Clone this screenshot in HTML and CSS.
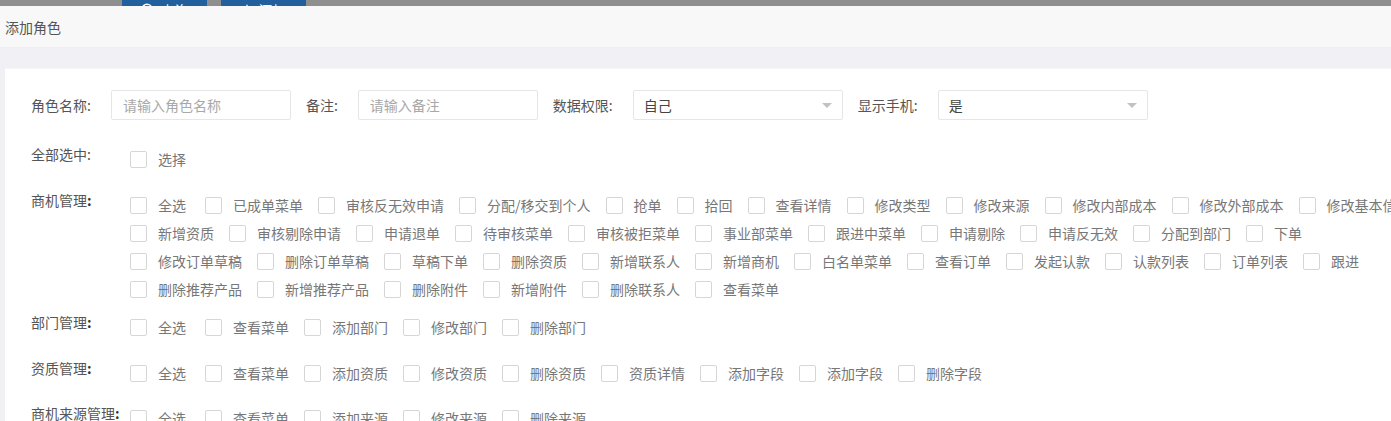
FILE: index.html
```html
<!DOCTYPE html>
<html lang="zh-CN">
<head>
<meta charset="utf-8">
<title>添加角色</title>
<link rel="stylesheet" href="styles.css">
</head>
<body>
<div class="backdrop">
  <div class="bg-btn btn-search"><svg class="ico" viewBox="0 0 14 14" width="14" height="14"><circle cx="6" cy="6" r="4.8" fill="none" stroke="#fff" stroke-width="1.4"/><path d="M9.5 9.5 L13 13" stroke="#fff" stroke-width="1.4"/></svg><span>查询</span></div>
  <div class="bg-btn btn-add"><svg class="ico" viewBox="0 0 14 14" width="12" height="12"><path d="M7 1 V13 M1 7 H13" stroke="#fff" stroke-width="1.6"/></svg><span>添加</span></div>
</div>
<div class="layer">
  <div class="layer-title">添加角色</div>
  <div class="layer-body">
    <div class="panel">
      <div class="form-line">
        <span class="f-label">角色名称:</span>
        <div class="input w180"><span class="ph">请输入角色名称</span></div>
        <span class="f-label">备注:</span>
        <div class="input w180"><span class="ph">请输入备注</span></div>
        <span class="f-label">数据权限:</span>
        <div class="input select w210"><span class="val">自己</span><i class="arrow"></i></div>
        <span class="f-label">显示手机:</span>
        <div class="input select w210"><span class="val">是</span><i class="arrow"></i></div>
      </div>

      <div class="sec sec-all">
        <div class="s-label">全部选中:</div>
        <div class="rows">
          <div class="row"><label class="cb"><i class="box"></i><span>选择</span></label></div>
        </div>
      </div>

      <div class="sec sec-biz">
        <div class="s-label">商机管理<b>:</b></div>
        <div class="rows">
          <div class="row">
            <label class="cb first"><i class="box"></i><span>全选</span></label>
            <label class="cb"><i class="box"></i><span>已成单菜单</span></label>
            <label class="cb"><i class="box"></i><span>审核反无效申请</span></label>
            <label class="cb"><i class="box"></i><span>分配/移交到个人</span></label>
            <label class="cb"><i class="box"></i><span>抢单</span></label>
            <label class="cb"><i class="box"></i><span>拾回</span></label>
            <label class="cb"><i class="box"></i><span>查看详情</span></label>
            <label class="cb"><i class="box"></i><span>修改类型</span></label>
            <label class="cb"><i class="box"></i><span>修改来源</span></label>
            <label class="cb"><i class="box"></i><span>修改内部成本</span></label>
            <label class="cb"><i class="box"></i><span>修改外部成本</span></label>
            <label class="cb"><i class="box"></i><span>修改基本信息</span></label>
          </div>
          <div class="row">
            <label class="cb"><i class="box"></i><span>新增资质</span></label>
            <label class="cb"><i class="box"></i><span>审核剔除申请</span></label>
            <label class="cb"><i class="box"></i><span>申请退单</span></label>
            <label class="cb"><i class="box"></i><span>待审核菜单</span></label>
            <label class="cb"><i class="box"></i><span>审核被拒菜单</span></label>
            <label class="cb"><i class="box"></i><span>事业部菜单</span></label>
            <label class="cb"><i class="box"></i><span>跟进中菜单</span></label>
            <label class="cb"><i class="box"></i><span>申请剔除</span></label>
            <label class="cb"><i class="box"></i><span>申请反无效</span></label>
            <label class="cb"><i class="box"></i><span>分配到部门</span></label>
            <label class="cb"><i class="box"></i><span>下单</span></label>
          </div>
          <div class="row">
            <label class="cb"><i class="box"></i><span>修改订单草稿</span></label>
            <label class="cb"><i class="box"></i><span>删除订单草稿</span></label>
            <label class="cb"><i class="box"></i><span>草稿下单</span></label>
            <label class="cb"><i class="box"></i><span>删除资质</span></label>
            <label class="cb"><i class="box"></i><span>新增联系人</span></label>
            <label class="cb"><i class="box"></i><span>新增商机</span></label>
            <label class="cb"><i class="box"></i><span>白名单菜单</span></label>
            <label class="cb"><i class="box"></i><span>查看订单</span></label>
            <label class="cb"><i class="box"></i><span>发起认款</span></label>
            <label class="cb"><i class="box"></i><span>认款列表</span></label>
            <label class="cb"><i class="box"></i><span>订单列表</span></label>
            <label class="cb"><i class="box"></i><span>跟进</span></label>
          </div>
          <div class="row">
            <label class="cb"><i class="box"></i><span>删除推荐产品</span></label>
            <label class="cb"><i class="box"></i><span>新增推荐产品</span></label>
            <label class="cb"><i class="box"></i><span>删除附件</span></label>
            <label class="cb"><i class="box"></i><span>新增附件</span></label>
            <label class="cb"><i class="box"></i><span>删除联系人</span></label>
            <label class="cb"><i class="box"></i><span>查看菜单</span></label>
          </div>
        </div>
      </div>

      <div class="sec sec-dept">
        <div class="s-label">部门管理<b>:</b></div>
        <div class="rows">
          <div class="row">
            <label class="cb first"><i class="box"></i><span>全选</span></label>
            <label class="cb"><i class="box"></i><span>查看菜单</span></label>
            <label class="cb"><i class="box"></i><span>添加部门</span></label>
            <label class="cb"><i class="box"></i><span>修改部门</span></label>
            <label class="cb"><i class="box"></i><span>删除部门</span></label>
          </div>
        </div>
      </div>

      <div class="sec sec-qual">
        <div class="s-label">资质管理<b>:</b></div>
        <div class="rows">
          <div class="row">
            <label class="cb first"><i class="box"></i><span>全选</span></label>
            <label class="cb"><i class="box"></i><span>查看菜单</span></label>
            <label class="cb"><i class="box"></i><span>添加资质</span></label>
            <label class="cb"><i class="box"></i><span>修改资质</span></label>
            <label class="cb"><i class="box"></i><span>删除资质</span></label>
            <label class="cb"><i class="box"></i><span>资质详情</span></label>
            <label class="cb"><i class="box"></i><span>添加字段</span></label>
            <label class="cb"><i class="box"></i><span>添加字段</span></label>
            <label class="cb"><i class="box"></i><span>删除字段</span></label>
          </div>
        </div>
      </div>

      <div class="sec sec-src">
        <div class="s-label">商机来源管理<b>:</b></div>
        <div class="rows">
          <div class="row">
            <label class="cb first"><i class="box"></i><span>全选</span></label>
            <label class="cb"><i class="box"></i><span>查看菜单</span></label>
            <label class="cb"><i class="box"></i><span>添加来源</span></label>
            <label class="cb"><i class="box"></i><span>修改来源</span></label>
            <label class="cb"><i class="box"></i><span>删除来源</span></label>
          </div>
        </div>
      </div>
    </div>
  </div>
</div>
</body>
</html>
```
FILE: styles.css
```css
* { box-sizing: border-box; }
html, body {
  margin: 0;
  padding: 0;
  width: 1391px;
  height: 421px;
  overflow: hidden;
  background: #fff;
  font-family: "Noto Sans CJK SC", "Noto Sans", sans-serif;
  font-size: 14px;
  color: #333;
}

.backdrop {
  height: 6px;
  background: #8f8f8f;
  overflow: hidden;
  display: flex;
  padding-left: 122px;
  gap: 14px;
}
.bg-btn {
  width: 85px;
  height: 30px;
  margin-top: -5px;
  background: #21609c;
  color: #fff;
  display: flex;
  align-items: center;
  justify-content: center;
  gap: 6px;
  font-size: 14px;
  line-height: 30px;
}
.bg-btn .ico { flex: none; }

.layer-title {
  height: 42px;
  line-height: 42px;
  padding-left: 5px;
  background: #f8f8f8;
  border-bottom: 1px solid #eeeef2;
  color: #555;
  font-size: 14px;
}
.layer-body {
  background: #f0f0f5;
  padding: 20px 0 0 5px;
  height: 380px;
}
.panel {
  background: #fff;
  width: 1500px;
  height: 100%;
  padding: 21px 0 0 26px;
  border-top: 1px solid #f6f6f9;
}

.form-line {
  display: flex;
  align-items: center;
  height: 30px;
}
.f-label {
  color: #555;
  margin-right: 20px;
  white-space: nowrap;
}
.input {
  height: 30px;
  border: 1px solid #e6e6e6;
  border-radius: 2px;
  padding-left: 11px;
  display: flex;
  align-items: center;
  margin-right: 15px;
  position: relative;
}
.w180 { width: 180px; }
.w210 { width: 210px; }
.ph { color: #a8a8a8; }
.select { padding-left: 10px; }
.val { color: #444; }
.arrow {
  position: absolute;
  right: 10px;
  top: 12px;
  width: 0;
  height: 0;
  border-left: 5px solid transparent;
  border-right: 5px solid transparent;
  border-top: 5px solid #c2c2c2;
}

.sec {
  display: flex;
  align-items: flex-start;
}
.sec-all { margin-top: 25px; }
.sec-biz { margin-top: 18px; }
.sec-dept { margin-top: 10px; }
.sec-qual { margin-top: 18px; }
.sec-src { margin-top: 17px; }

.s-label {
  width: 99px;
  flex: none;
  line-height: 18px;
  color: #555;
  white-space: nowrap;
}
.s-label b { font-weight: 700; color: #333; }

.rows { display: flex; flex-direction: column; }
.row {
  display: flex;
  align-items: center;
  height: 28px;
  white-space: nowrap;
}
.cb {
  display: flex;
  align-items: center;
  margin-right: 15px;
  color: #777;
  line-height: 18px;
}
.cb.first { margin-right: 19px; }
.box {
  width: 17px;
  height: 17px;
  border: 1px solid #d6d6d6;
  border-radius: 2px;
  background: #fff;
  margin-right: 11px;
  flex: none;
}
```
